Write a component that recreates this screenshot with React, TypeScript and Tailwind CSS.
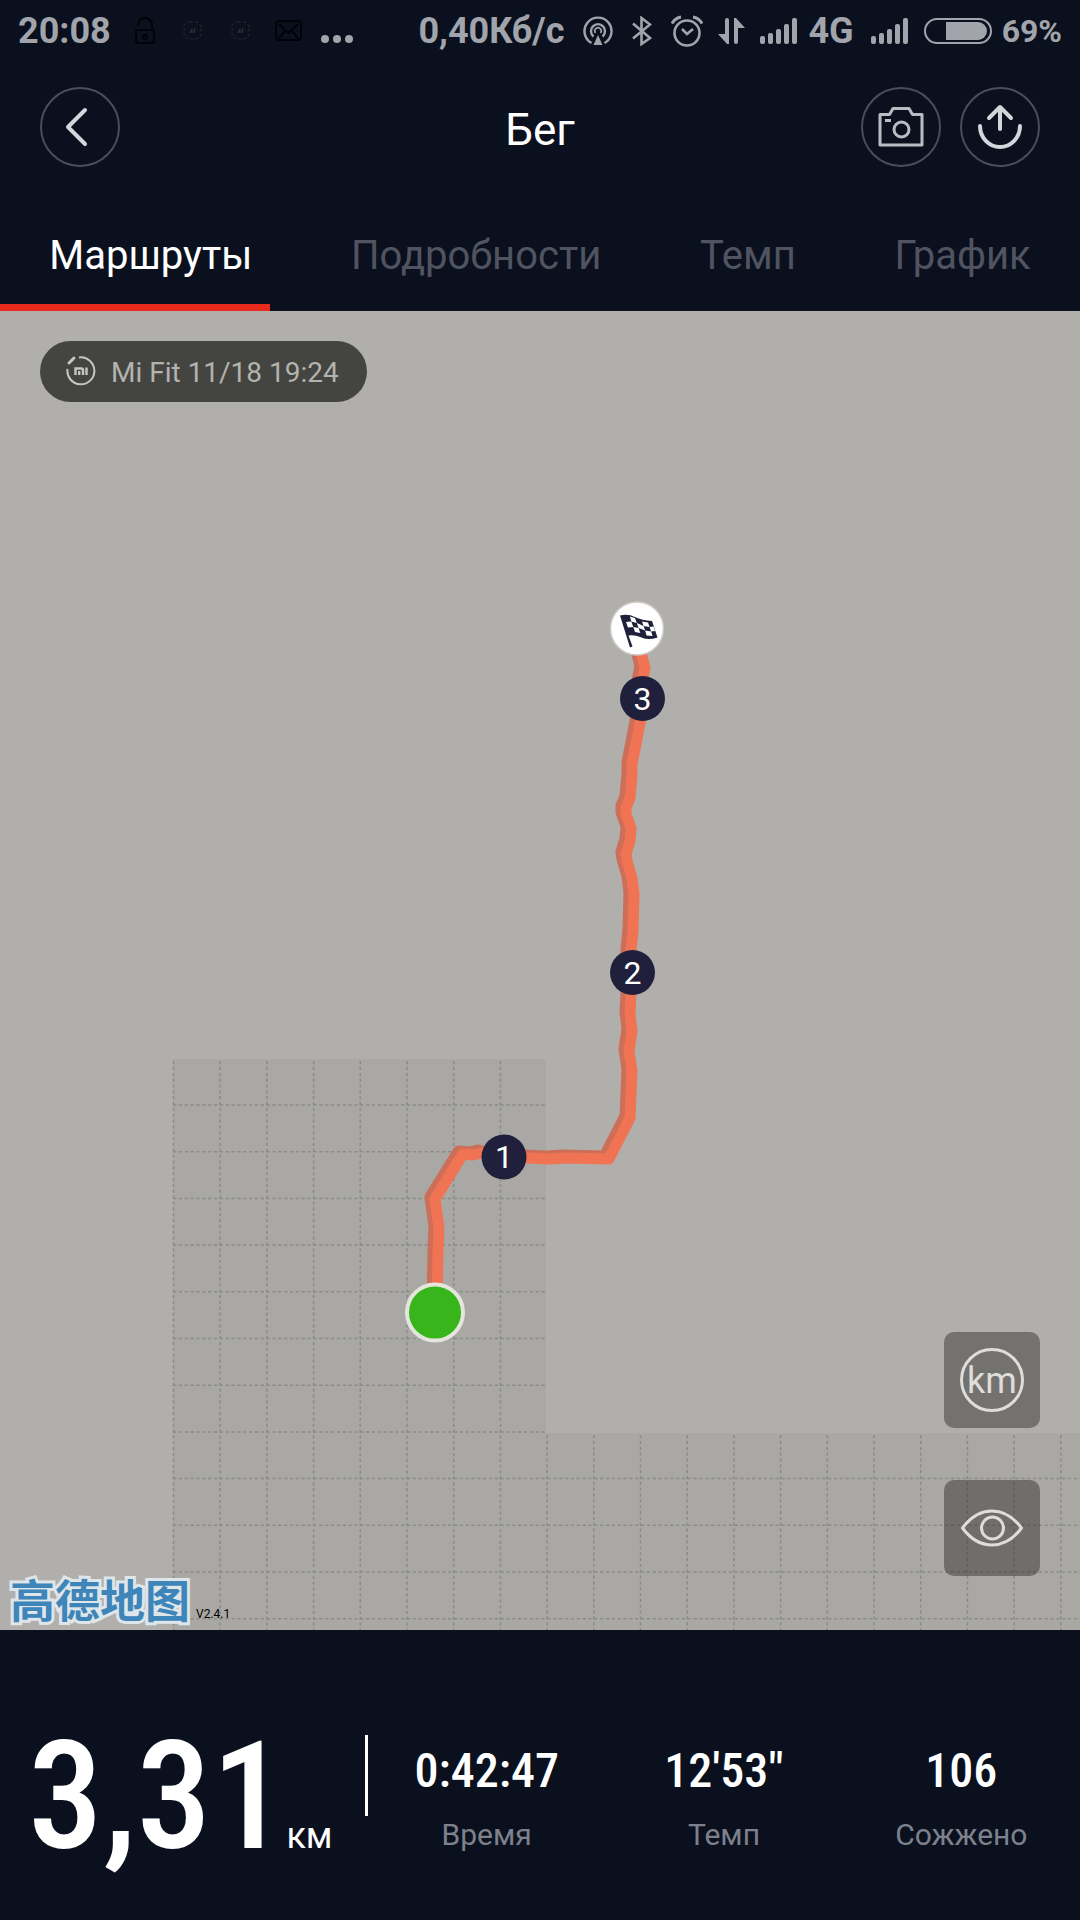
import React from "react";

const CONDENSED = "font-['Roboto_Condensed','Liberation_Sans_Narrow',Roboto,sans-serif]";

/* ---------- status bar icons ---------- */

function LockIcon() {
  return (
    <svg width="20" height="28" viewBox="0 0 20 28" fill="none" stroke="#020306" strokeWidth="2">
      <path d="M3 9V8a7 7 0 0 1 14 0v5" />
      <rect x="1" y="13" width="18" height="13" rx="2" />
      <circle cx="10" cy="20" r="2" />
    </svg>
  );
}

function FaintBadgeIcon() {
  return (
    <svg width="20" height="20" viewBox="0 0 20 20" fill="none" stroke="#2b2b2c">
      <rect x="1" y="1" width="17" height="17" rx="6" strokeDasharray="3 2" />
      <path d="M7 12l2-4v4M11 12l1-5" stroke="#3a3834" />
    </svg>
  );
}

function MailIcon() {
  return (
    <svg width="28" height="22" viewBox="0 0 28 22" fill="none" stroke="#020306" strokeWidth="2">
      <rect x="1" y="1" width="25" height="19" rx="3" />
      <path d="M4 4l9.500 9L23 4M4 18l6-7M23 18l-6-7" />
    </svg>
  );
}

function DotsIcon() {
  return (
    <svg width="32" height="28" viewBox="0 0 32 28" fill="#a2a4ab">
      <circle cx="4" cy="22" r="4" />
      <circle cx="16" cy="22" r="4" />
      <circle cx="28" cy="22" r="4" />
    </svg>
  );
}

function HotspotIcon() {
  return (
    <svg width="30" height="30" viewBox="0 0 30 30" fill="none" stroke="#a2a4ab" strokeWidth="2.400">
      <path d="M8.500 27A13.500 13.500 0 1 1 21.500 27" />
      <path d="M10.500 20.500A7 7 0 1 1 19.500 20.500" />
      <path d="M12.500 17A3.200 3.200 0 1 1 17.500 17" strokeWidth="1.600" />
      <path d="M15 19l4.500 10h-9z" fill="#a2a4ab" stroke="none" />
    </svg>
  );
}

function BluetoothIcon() {
  return (
    <svg width="20" height="30" viewBox="0 0 20 30" fill="none" stroke="#a2a4ab" strokeWidth="2.600">
      <path d="M1 7.500L18 22l-8.500 6V2L18 8.500 1 22.500" />
    </svg>
  );
}

function AlarmIcon() {
  return (
    <svg width="32" height="32" viewBox="0 0 32 32" fill="none" stroke="#a2a4ab" strokeWidth="2.600">
      <circle cx="16" cy="18" r="12.500" />
      <path d="M11 14l5 5 6-5" />
      <path d="M1 8.500Q4 3 10 2M31 8.500Q28 3 22 2" strokeWidth="3" />
    </svg>
  );
}

function DataIcon() {
  return (
    <svg width="27" height="28" viewBox="0 0 27 28" fill="#a2a4ab">
      <path d="M7 3a2 2 0 0 1 4 0v24H9L0 17h7z" />
      <path d="M16 25a2 2 0 0 0 4 0V11h7L18 1h-2z" />
    </svg>
  );
}

function SignalIcon() {
  return (
    <svg width="38" height="28" viewBox="0 0 38 28" fill="#a2a4ab">
      <rect x="0" y="19" width="5" height="8" rx="2" />
      <rect x="8" y="16" width="5" height="11" rx="2" />
      <rect x="16" y="12" width="5" height="15" rx="2" />
      <rect x="24" y="7" width="5" height="20" rx="2" />
      <rect x="32" y="1" width="5" height="26" rx="2" />
    </svg>
  );
}

function BatteryIcon() {
  return (
    <svg width="68" height="28" viewBox="0 0 68 28">
      <rect x="1" y="2" width="66" height="24" rx="12" fill="none" stroke="#a2a4ab" strokeWidth="2" />
      <path d="M22 5h32a9 9 0 0 1 0 18H22z" fill="#a2a4ab" />
    </svg>
  );
}

function StatusBar() {
  return (
    <div className="flex h-15 items-center justify-between pt-0.5 pr-[18px] pl-[18px] text-4xl leading-none font-bold text-[#a2a4ab]">
      <div className="flex items-center">
        <span className="mr-6">20:08</span>
        <div className="mr-7 flex">
          <LockIcon />
        </div>
        <div className="mr-6 flex items-center gap-7">
          <FaintBadgeIcon />
          <FaintBadgeIcon />
        </div>
        <div className="flex items-center gap-[18px]">
          <MailIcon />
          <DotsIcon />
        </div>
      </div>
      <div className="flex items-center gap-[15px]">
        <div className="flex items-center gap-[19px]">
          <span>0,40Кб/с</span>
          <HotspotIcon />
          <BluetoothIcon />
          <AlarmIcon />
        </div>
        <DataIcon />
        <div className="flex items-center gap-2.5 pr-0.5">
          <SignalIcon />
          <span>4G</span>
        </div>
        <SignalIcon />
        <div className="flex items-center gap-2.5">
          <BatteryIcon />
          <span className="text-[32px]">69%</span>
        </div>
      </div>
    </div>
  );
}

/* ---------- header ---------- */

function RoundButton({ label, children }: { label: string; children: React.ReactNode }) {
  return (
    <button
      type="button"
      aria-label={label}
      className="flex size-20 items-center justify-center rounded-full border-2 border-[#4a4e59]"
    >
      {children}
    </button>
  );
}

function Header() {
  return (
    <header className="grid h-[134px] grid-cols-[1fr_auto_1fr] items-center px-10">
      <RoundButton label="Назад">
        <svg width="48" height="48" viewBox="0 0 48 48" fill="none" stroke="#d3d7db" strokeWidth="4" strokeLinecap="round" strokeLinejoin="round">
          <path d="M29 7L12 24l17 17" />
        </svg>
      </RoundButton>
      <h1 className="pt-1.5 text-[44px] leading-none text-white">Бег</h1>
      <div className="flex justify-end gap-[19px]">
        <RoundButton label="Камера">
          <svg width="48" height="48" viewBox="0 0 48 48" fill="none" stroke="#b9bdc2" strokeWidth="3" strokeLinejoin="round">
            <path d="M3 11.500h9.500l3.500-6h16l3.500 6H45V42H3z" />
            <circle cx="24.500" cy="26.500" r="7.500" />
            <path d="M8 17.500h6" />
          </svg>
        </RoundButton>
        <RoundButton label="Поделиться">
          <svg width="48" height="48" viewBox="0 0 48 48" fill="none" stroke="#d3d7db" strokeWidth="4" strokeLinecap="round" strokeLinejoin="round">
            <path d="M24 26V5M13 15L24 4l11 11" />
            <path d="M4 23a20 21 0 0 0 40 0" />
          </svg>
        </RoundButton>
      </div>
    </header>
  );
}

const TABS = ["Маршруты", "Подробности", "Темп", "График"];

function Tabs() {
  return (
    <nav className="relative flex h-[117px]">
      {TABS.map((tab, i) => (
        <button
          key={tab}
          type="button"
          className={
            i === 0
              ? "flex-auto px-12 pt-1.5 text-[40px] leading-none whitespace-nowrap text-white"
              : "flex-auto px-12 pt-1.5 text-[40px] leading-none whitespace-nowrap text-[#505460]"
          }
        >
          {tab}
        </button>
      ))}
      <div className="absolute bottom-0 left-0 h-[7px] w-1/4 bg-[#e8291d]" />
    </nav>
  );
}

/* ---------- map ---------- */

const ROUTE =
  "637,640 640,655 643,667 640,682 642,698 638,722 634,743 630,763 630,775 628,797 624,807 624,813 629,827 628,840 624,853 625,860 630,877 632,893 631,930 629,950 629,993 628,1013 630,1030 627,1050 630,1070 628,1117 607,1158 565,1157 547,1158 527,1157 504,1157 480,1152 471,1154 461,1153 433,1198 437,1227 436,1250 435,1312";

const GRID_STEP = 46.7;
const columns = Array.from({ length: 20 }, (_, i) => 173.5 + i * GRID_STEP);
const rows = Array.from({ length: 12 }, (_, i) => 1105 + i * GRID_STEP);

function KmMarker({ x, y, n }: { x: number; y: number; n: number }) {
  return (
    <g>
      <circle cx={x} cy={y} r="22.500" fill="#20203c" />
      <text x={x} y={y + 11} textAnchor="middle" fontSize="32" fill="#ffffff">
        {n}
      </text>
    </g>
  );
}

function MapDrawing() {
  return (
    <svg
      className="absolute inset-0 size-full"
      viewBox="0 311 1080 1319"
      preserveAspectRatio="xMidYMid slice"
      role="img"
      aria-label="Карта маршрута"
    >
      <path d="M173 1059h373v374h534v197H173z" fill="#a9a8a4" />
      <g stroke="#8b8b87" strokeWidth="1.500" strokeDasharray="3.200 2.650">
        {columns.map((x, i) => (
          <path key={x} d={`M${x} ${i < 8 ? 1061 : 1435}V1630`} />
        ))}
        {rows.map((y) => (
          <path key={y} d={`M173 ${y}H${y < 1433 ? 545 : 1080}`} />
        ))}
      </g>
      <polyline points={ROUTE} fill="none" stroke="#cd6e59" strokeWidth="13" strokeLinejoin="round" transform="translate(-2 -1)" />
      <polyline points={ROUTE} fill="none" stroke="#f07454" strokeWidth="11" strokeLinejoin="round" transform="translate(2 1)" />
      <circle cx="435" cy="1312.500" r="28" fill="#37b51b" stroke="#e4e6dd" strokeWidth="4" />
      <KmMarker x={504} y={1157} n={1} />
      <KmMarker x={632.5} y={972.5} n={2} />
      <KmMarker x={642.5} y={698.5} n={3} />
      <circle cx="637" cy="628.500" r="26.500" fill="#ffffff" stroke="#cfcac5" strokeWidth="1.500" />
      {/* finish flag */}
      <g>
        <path d="M620 615.500q8-2 15 1.500t17 4l5.500 16.500q-9 3-16 0t-13-2l4 11-2.500 1z" fill="#20203c" />
        <g fill="#ffffff">
          <path d="M630 616.500l5 1.500 1.800 5-5.500-1.500z" />
          <path d="M642 621.500l6 1 1.600 4.500-6-1z" />
          <path d="M626 622l5.300-.5 2 5.500-5.300.5z" />
          <path d="M636.800 623l6.800 3 1.500 4.500-6.500-2.500z" />
          <path d="M649.600 627l4-.5 1.500 4.500-4 .5z" />
          <path d="M633.300 627l5.300 1 1.700 5-5.300-1z" />
          <path d="M645.100 630.500l6 1 1.500 4.500-6-.5z" />
        </g>
      </g>
    </svg>
  );
}

function MapSection() {
  return (
    <main className="relative flex flex-1 flex-col justify-between bg-[#b0afab]">
      <MapDrawing />
      <div className="relative flex px-10 pt-[30px]">
        <div className="flex h-[61px] items-center gap-[15px] rounded-full bg-[#444541] pr-7 pl-[26px] text-[28px] leading-none text-[#b3b3af]">
          <svg width="30" height="34" viewBox="0 0 30 34" fill="none" stroke="#c6c6c2" strokeWidth="2">
            <path d="M13 2.500A13.500 13.500 0 1 1 1.500 14" />
            <path d="M3 8l5-5" strokeWidth="3" strokeLinecap="round" />
            <path d="M9.500 20v-6.500h6q1.500 0 1.500 1.500v5M13.200 16v4M20.500 12.500V20" strokeWidth="2.400" />
          </svg>
          <span className="pt-0.5">Mi Fit 11/18 19:24</span>
        </div>
      </div>
      <div className="relative flex items-end justify-between pr-10 pl-2.5">
        <div className="flex items-end gap-1.5 pb-1.5">
          <span className="text-[45px] leading-[50px] font-bold text-[#3e85ba] font-['Noto_Sans_CJK_SC',sans-serif] [-webkit-text-stroke:6px_#dfe6ea] [paint-order:stroke_fill]">
            高德地图
          </span>
          <span className="pb-0.5 text-xs text-black">V2.4.1</span>
        </div>
        <div className="flex flex-col gap-[52px] pb-[54px]">
          <button
            type="button"
            className="flex size-24 items-center justify-center rounded-[10px] bg-[#21201c]/42"
          >
            <span className="flex size-16 items-center justify-center rounded-full border-3 border-[#deddd9] pt-0.5 text-4xl leading-none text-[#deddd9]">
              km
            </span>
          </button>
          <button
            type="button"
            aria-label="Показать карту"
            className="flex size-24 items-center justify-center rounded-[10px] bg-[#21201c]/42"
          >
            <svg width="64" height="40" viewBox="0 0 64 40" fill="none" stroke="#deddd9" strokeWidth="3" strokeLinejoin="round">
              <path d="M2.500 20Q15 3 32 3T61.500 20Q49 37 32 37T2.500 20z" />
              <circle cx="32.500" cy="20" r="11" />
            </svg>
          </button>
        </div>
      </div>
    </main>
  );
}

/* ---------- summary ---------- */

const STATS = [
  { value: "0:42:47", label: "Время" },
  { value: "12'53\"", label: "Темп" },
  { value: "106", label: "Сожжено" },
];

function Summary() {
  return (
    <footer className="flex h-[290px] items-center">
      <div className="flex w-[365px] items-baseline pt-11 pl-7 text-white">
        <span className={`${CONDENSED} text-[150px] leading-none font-medium`}>3,31</span>
        <span className="text-4xl leading-none">км</span>
      </div>
      <div className="h-[81px] w-[3px] bg-white" />
      <dl className="grid flex-1 grid-cols-3 pt-[50px]">
        {STATS.map((s) => (
          <div key={s.label} className="flex flex-col-reverse items-center gap-[22px]">
            <dt className="text-[30px] leading-9 text-[#7d818b]">{s.label}</dt>
            <dd className={`${CONDENSED} text-5xl leading-none font-medium text-white`}>{s.value}</dd>
          </div>
        ))}
      </dl>
    </footer>
  );
}

export default function App() {
  return (
    <div className="flex min-h-screen flex-col bg-[#0a101e] font-[Roboto,sans-serif]">
      <StatusBar />
      <Header />
      <Tabs />
      <MapSection />
      <Summary />
    </div>
  );
}
